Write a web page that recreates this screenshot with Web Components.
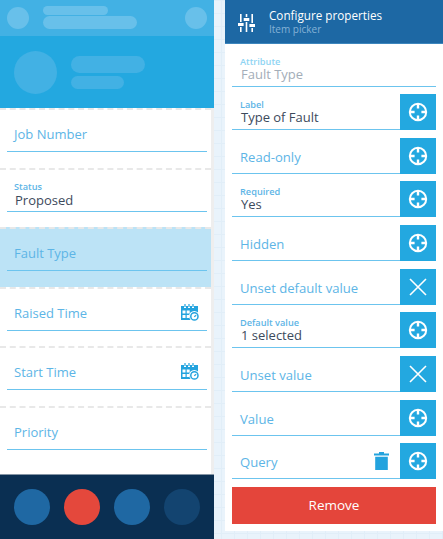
<!DOCTYPE html>
<html>
<head>
<meta charset="utf-8">
<title>Configure properties</title>
<style>
  html, body { margin: 0; padding: 0; height: 539px; overflow: hidden; }
  body {
    font-family: 'Open Sans', sans-serif;
    background-color: #e9f3fb;
    background-image:
      linear-gradient(#e1eef8 1px, transparent 1px),
      linear-gradient(90deg, #e1eef8 1px, transparent 1px);
    background-size: 13px 13px;
  }
</style>
</head>
<body>
<app-screen>
  <phone-preview slot="left">
    <preview-field label="Job Number"></preview-field>
    <preview-field label="Status" value="Proposed"></preview-field>
    <preview-field label="Fault Type" selected></preview-field>
    <preview-field label="Raised Time" calendar></preview-field>
    <preview-field label="Start Time" calendar></preview-field>
    <preview-field label="Priority"></preview-field>
  </phone-preview>
  <props-panel slot="right">
    <prop-row label="Attribute" value="Fault Type" readonly></prop-row>
    <prop-row label="Label" value="Type of Fault" action="pick"></prop-row>
    <prop-row label="Read-only" action="pick"></prop-row>
    <prop-row label="Required" value="Yes" action="pick"></prop-row>
    <prop-row label="Hidden" action="pick"></prop-row>
    <prop-row label="Unset default value" action="clear"></prop-row>
    <prop-row label="Default value" value="1 selected" action="pick"></prop-row>
    <prop-row label="Unset value" action="clear"></prop-row>
    <prop-row label="Value" action="pick"></prop-row>
    <prop-row label="Query" action="pick" trash></prop-row>
  </props-panel>
</app-screen>

<script>
  const calendarIcon = `
    <svg width="18" height="17" viewBox="0 0 18 17">
      <path fill="#23a3de" d="M0 2h3v2h2V2h2v2h2V2h2v2h2V2h4v6.4A5 5 0 0 0 9.6 16H0z"/>
      <path fill="#23a3de" d="M3.4 0h1.2v3H3.4zM7.4 0h1.2v3H7.4zM11.4 0h1.2v3h-1.2z"/>
      <path fill="#fff" d="M1.5 6.5h3v3h-3zM5.7 6.5h3v3h-3zM1.5 11h3v3h-3zM5.7 11h2.4v3H5.7z"/>
      <circle cx="13.4" cy="12.4" r="3.6" fill="#fff" stroke="#23a3de" stroke-width="1.5"/>
      <path fill="none" stroke="#23a3de" stroke-width="1.2" d="M13.2 12.8l2-1.6"/>
    </svg>`;

  const pickIcon = `
    <svg width="20" height="20" viewBox="0 0 20 20" fill="none" stroke="#fff">
      <circle cx="10" cy="10" r="8.2" stroke-width="2"/>
      <path stroke-width="2.4" d="M10 2v4.6M10 13.4V18M2 10h4.6M13.4 10H18"/>
    </svg>`;

  const clearIcon = `
    <svg width="18" height="18" viewBox="0 0 18 18" fill="none" stroke="#fff" stroke-width="1.6">
      <path d="M1 1l16 16M17 1L1 17"/>
    </svg>`;

  const trashIcon = `
    <svg width="15" height="18" viewBox="0 0 15 18" fill="#23a3de">
      <path d="M5 0h5v1.4h5v2H0v-2h5zM1.2 4.8h12.6V18H1.2z"/>
    </svg>`;

  const slidersIcon = `
    <svg width="17" height="18" viewBox="0 0 17 18" fill="#fff">
      <path d="M2 0h1.6v8H2zM2 13h1.6v5H2zM7.7 0h1.6v3H7.7zM7.7 8h1.6v10H7.7zM13.4 0H15v9h-1.6zM13.4 14H15v4h-1.6z"/>
      <path d="M0 9h5.6v3H0zM5.7 4h5.6v3H5.7zM11.4 10H17v3h-5.6z"/>
    </svg>`;

  // 전체 화면 배치
  class AppScreen extends HTMLElement {
    constructor() {
      super();
      this.attachShadow({ mode: 'open' });
      this.shadowRoot.innerHTML = `
<style>
  :host {
    display: flex;
    width: 443px;
    height: 539px;
    gap: 11px;
  }
  .left { display: block; width: 214px; flex: none; }
  .right { display: block; width: 218px; flex: none; }
</style>
<div class="left"><slot name="left"></slot></div>
<div class="right"><slot name="right"></slot></div>`;
    }
  }

  // 왼쪽 미리보기 화면
  class PhonePreview extends HTMLElement {
    constructor() {
      super();
      this.attachShadow({ mode: 'open' });
      this.shadowRoot.innerHTML = `
<style>
  :host {
    display: flex;
    flex-direction: column;
    height: 539px;
    background: #fff;
  }
  .topbar {
    height: 36px;
    background: #42b1e4;
    display: flex;
    align-items: center;
    padding: 0 7px;
    flex: none;
  }
  .dot { border-radius: 50%; background: #68c0ea; flex: none; }
  .topbar .dot { width: 22px; height: 22px; }
  .lines { display: flex; flex-direction: column; }
  .bar { border-radius: 7px; background: #68c0ea; }
  .topbar .lines { flex: 1; margin-left: 14px; gap: 1px; margin-top: -1px; }
  .topbar .bar:nth-child(1) { width: 65px; height: 9px; }
  .topbar .bar:nth-child(2) { width: 94px; height: 13px; }
  .hero {
    height: 72px;
    background: #23a8e0;
    display: flex;
    align-items: center;
    padding: 0 14px;
    flex: none;
  }
  .hero .dot { width: 43px; height: 43px; background: #42b1e4; }
  .hero .lines { margin-left: 14px; gap: 3px; }
  .hero .bar { background: #42b1e4; }
  .hero .bar:nth-child(1) { width: 74px; height: 17px; border-radius: 9px; }
  .hero .bar:nth-child(2) { width: 53px; height: 13px; }
  .list {
    flex: 1;
    border-right: 3px solid #eeeeee;
    display: flex;
    flex-direction: column;
  }
  .footer {
    height: 65px;
    flex: none;
    background: #0a2f52;
    border-top: 1px solid #8595a5;
    box-sizing: border-box;
    display: flex;
    align-items: center;
    gap: 14px;
    padding: 0 14px;
  }
  .footer .dot { width: 36px; height: 36px; background: #1f68a3; }
  .footer .dot.red { background: #e4483c; }
  .footer .dot.dim { background: #134470; }
</style>
<div class="topbar">
  <div class="dot"></div>
  <div class="lines"><div class="bar"></div><div class="bar"></div></div>
  <div class="dot"></div>
</div>
<div class="hero">
  <div class="dot"></div>
  <div class="lines"><div class="bar"></div><div class="bar"></div></div>
</div>
<div class="list"><slot></slot></div>
<div class="footer">
  <div class="dot"></div>
  <div class="dot red"></div>
  <div class="dot"></div>
  <div class="dot dim"></div>
</div>`;
    }
  }

  // 미리보기 입력 항목
  class PreviewField extends HTMLElement {
    constructor() {
      super();
      this.attachShadow({ mode: 'open' });
    }

    connectedCallback() {
      const label = this.getAttribute('label');
      const value = this.getAttribute('value');
      const text = value
        ? `<div class="small">${label}</div><div class="value">${value}</div>`
        : `<div class="label">${label}</div>`;
      this.shadowRoot.innerHTML = `
<style>
  :host {
    display: block;
    height: 59.5px;
    box-sizing: border-box;
    padding: 1px 4px 0 7px;
    border-top: 2px dashed #e8e8e8;
    font-family: 'Open Sans', sans-serif;
  }
  :host([selected]) { background: #bce3f6; }
  .box {
    height: 41px;
    box-sizing: border-box;
    border-bottom: 1px solid #6cc4ee;
    display: flex;
    align-items: flex-end;
    justify-content: space-between;
    padding: 0 8px 8px 7px;
  }
  .label { font-size: 13px; line-height: 18px; color: #5db5e6; }
  .small { font-size: 9.2px; line-height: 11px; color: #5db5e6; font-weight: 600; }
  .value { font-size: 13px; line-height: 16px; color: #3c4a5c; margin: 0 0 -5px 1px; }
  svg { display: block; margin-bottom: 1px; }
</style>
<div class="box">
  <div>${text}</div>
  ${this.hasAttribute('calendar') ? calendarIcon : ''}
</div>`;
    }
  }

  // 오른쪽 속성 패널
  class PropsPanel extends HTMLElement {
    constructor() {
      super();
      this.attachShadow({ mode: 'open' });
      this.shadowRoot.innerHTML = `
<style>
  :host {
    display: flex;
    flex-direction: column;
    height: 531px;
    background: #fff;
    font-family: 'Open Sans', sans-serif;
  }
  .head {
    height: 44px;
    flex: none;
    box-sizing: border-box;
    background: #1d68a4;
    border-bottom: 1px solid #3d86bd;
    display: flex;
    align-items: center;
    gap: 14px;
    padding: 2px 0 0 13px;
    color: #fff;
  }
  .title { font-size: 11.7px; line-height: 15px; margin-top: -2px; }
  .sub { font-size: 10px; line-height: 13px; color: #85b2d6; }
  .rows {
    display: flex;
    flex-direction: column;
    gap: 7.65px;
    padding: 6.5px 7px 0 7px;
  }
  .remove {
    margin: 7.5px 7px 0 7px;
    height: 37px;
    background: #e4453b;
    color: #fff;
    font-size: 13.5px;
    display: flex;
    align-items: center;
    justify-content: center;
  }
</style>
<div class="head">
  ${slidersIcon}
  <div>
    <div class="title">Configure properties</div>
    <div class="sub">Item picker</div>
  </div>
</div>
<div class="rows"><slot></slot></div>
<div class="remove">Remove</div>`;
    }
  }

  // 속성 한 줄
  class PropRow extends HTMLElement {
    constructor() {
      super();
      this.attachShadow({ mode: 'open' });
    }

    connectedCallback() {
      const label = this.getAttribute('label');
      const value = this.getAttribute('value');
      const action = this.getAttribute('action');
      const text = value
        ? `<div class="small">${label}</div><div class="value">${value}</div>`
        : `<div class="label">${label}</div>`;
      const button = action
        ? `<div class="btn">${action === 'clear' ? clearIcon : pickIcon}</div>`
        : '';
      this.shadowRoot.innerHTML = `
<style>
  :host {
    display: flex;
    height: 36px;
    font-family: 'Open Sans', sans-serif;
  }
  .field {
    flex: 1;
    min-width: 0;
    box-sizing: border-box;
    border-bottom: 1px solid #6cc4ee;
    display: flex;
    align-items: flex-end;
    justify-content: space-between;
    padding: 0 11px 4px 8px;
  }
  .label { font-size: 13.1px; line-height: 18px; color: #5db5e6; margin-bottom: 3px; }
  .small { font-size: 9.2px; line-height: 11px; color: #5db5e6; font-weight: 600; }
  .value { font-size: 13px; line-height: 15px; color: #3c4a5c; margin-left: 1px; }
  :host([readonly]) .small { color: #8ed4f3; }
  :host([readonly]) .value { color: #a3adb8; }
  .btn {
    width: 36px;
    height: 36px;
    flex: none;
    background: #23a8e0;
    display: flex;
    align-items: center;
    justify-content: center;
  }
  .trash { display: block; margin-bottom: 4px; }
  .trash svg { display: block; }
</style>
<div class="field">
  <div>${text}</div>
  ${this.hasAttribute('trash') ? `<div class="trash">${trashIcon}</div>` : ''}
</div>
${button}`;
    }
  }

  customElements.define('app-screen', AppScreen);
  customElements.define('phone-preview', PhonePreview);
  customElements.define('preview-field', PreviewField);
  customElements.define('props-panel', PropsPanel);
  customElements.define('prop-row', PropRow);
</script>
</body>
</html>
